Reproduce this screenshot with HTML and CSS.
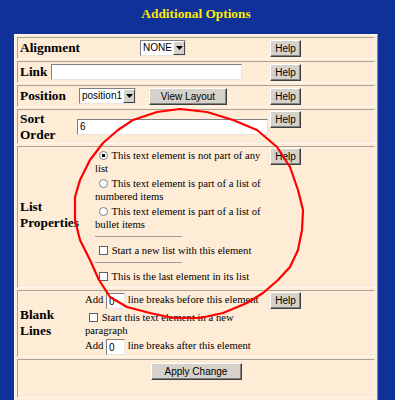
FILE: index.html
```html
<!DOCTYPE html>
<html lang="en">
<head>
    <meta charset="UTF-8">
    <meta name="viewport" content="width=device-width, initial-scale=1.0">
    <title>Additional Options</title>
    <link rel="stylesheet" href="styles.css">
</head>
<body>
    <div class="title">Additional Options</div>

    <form class="panel">
        <div class="row row-align">
            <div class="label">Alignment</div>
            <div class="field">
                <span class="select select-none"><span class="select-value">NONE</span><span class="select-arrow"><svg width="7" height="4" viewBox="0 0 7 4"><path d="M0 0h7L3.5 4z" fill="#000"/></svg></span></span>
            </div>
            <button type="button" class="btn btn-help">Help</button>
        </div>

        <div class="row row-link">
            <div class="label">Link</div>
            <div class="field">
                <input type="text" class="text-input input-wide">
            </div>
            <button type="button" class="btn btn-help">Help</button>
        </div>

        <div class="row row-position">
            <div class="label">Position</div>
            <div class="field">
                <span class="select select-position"><span class="select-value">position1</span><span class="select-arrow"><svg width="7" height="4" viewBox="0 0 7 4"><path d="M0 0h7L3.5 4z" fill="#000"/></svg></span></span>
                <button type="button" class="btn btn-layout">View Layout</button>
            </div>
            <button type="button" class="btn btn-help">Help</button>
        </div>

        <div class="row row-sort row-top">
            <div class="label">Sort<br>Order</div>
            <div class="field">
                <input type="text" class="text-input input-wide" value="6">
            </div>
            <button type="button" class="btn btn-help">Help</button>
        </div>

        <div class="row row-list row-top">
            <div class="label">List<br>Properties</div>
            <div class="field text">
                <label class="option"><input type="radio" name="list" checked> This text element is not part of any list</label>
                <label class="option"><input type="radio" name="list"> This text element is part of a list of numbered items</label>
                <label class="option"><input type="radio" name="list"> This text element is part of a list of bullet items</label>
                <hr>
                <label class="option"><input type="checkbox"> Start a new list with this element</label>
                <hr>
                <label class="option"><input type="checkbox"> This is the last element in its list</label>
            </div>
            <button type="button" class="btn btn-help">Help</button>
        </div>

        <div class="row row-blank row-top">
            <div class="label">Blank<br>Lines</div>
            <div class="field text">
                <div class="option">Add <input type="text" class="text-input input-small" value="0"> line breaks before this element</div>
                <label class="option"><input type="checkbox"> Start this text element in a new paragraph</label>
                <div class="option">Add <input type="text" class="text-input input-small" value="0"> line breaks after this element</div>
            </div>
            <button type="button" class="btn btn-help">Help</button>
        </div>

        <div class="row row-apply">
            <button type="button" class="btn btn-apply">Apply Change</button>
        </div>
    </form>

    <!-- red marker drawn over the list options -->
    <svg class="marker" width="395" height="400" viewBox="0 0 395 400">
        <polygon points="180,109 207,112 233,120 257,130 277,147 290,167 298,190 303,210 302,230 298,250 290,267 278,280 263,293 247,303 223,313 200,318 173,318 150,313 127,307 110,297 99,280 90,260 80,240 75,220 75,197 80,180 90,160 103,143 118,130 133,120 157,112" fill="none" stroke="#ff0000" stroke-width="2.2" stroke-linejoin="round"/>
    </svg>
</body>
</html>
```

FILE: styles.css
```css
body {
    margin: 0;
    background-color: #10309a;
    font-family: "Liberation Serif", "Times New Roman", serif;
    color: #000;
    position: relative;
}
.title {
    width: 364px;
    margin-left: 14px;
    height: 34px;
    line-height: 28px;
    text-align: center;
    font-size: 13.33px;
    font-weight: bold;
    color: #ffeb00;
}
.panel {
    width: 364px;
    margin: 0 0 0 14px;
    box-sizing: border-box;
    background: #ffecd6;
    border: 1px solid;
    border-color: #fff6ec #8f8a84 #8f8a84 #fff6ec;
    padding: 0 2px 2px 2px;
}
.row {
    display: flex;
    align-items: center;
    min-height: 20px;
    margin-top: 2px;
    padding: 0 73px 0 1px;
    border: 1px solid;
    border-color: #a8a29a #fff8f0 #fff8f0 #a8a29a;
}
.row-top {
    align-items: flex-start;
}
.label {
    flex: none;
    width: var(--label-w);
    padding-left: 1px;
    box-sizing: border-box;
    font-size: 13.33px;
    font-weight: bold;
    line-height: 16px;
}
.row-top .label {
    align-self: center;
}
.field {
    flex: 1;
    display: flex;
    align-items: center;
}
.row-align { --label-w: 121px; }
.row-link { --label-w: 32px; }
.row-position { --label-w: 60px; }
.row-sort { --label-w: 58px; min-height: 33px; }
.row-list { --label-w: 76px; padding-bottom: 4px; }
.row-blank { --label-w: 66px; padding-bottom: 1px; }

.row-sort .field {
    align-self: center;
}

.text {
    display: block;
    font-size: 10.67px;
    line-height: 13px;
    padding-right: 2px;
}
.option {
    display: block;
    margin-top: 2px;
}
.option input[type="radio"],
.option input[type="checkbox"] {
    margin: 0 1px 0 4px;
    vertical-align: -1px;
}
.text hr {
    width: 50%;
    margin: 5px 0 7px 0;
    border: 0;
    border-top: 1px solid #a09a94;
}

/* classic form controls */
.btn {
    font-family: "Liberation Sans", Arial, sans-serif;
    font-size: 10px;
    color: #000;
    height: 17px;
    padding: 0;
    background: #d6d2ca;
    border: 1px solid;
    border-color: #fff #404040 #404040 #fff;
    box-shadow: inset -1px -1px #808080;
    cursor: pointer;
}
.btn-help {
    flex: none;
    width: 31px;
}
.row-top .btn-help {
    margin-top: 1px;
}
.btn-layout {
    width: 78px;
    margin-left: 13px;
}
.row-apply {
    justify-content: center;
    padding: 0;
}
.btn-apply {
    flex: none;
    width: 91px;
    margin: 3px 0 17px;
}
.text-input {
    box-sizing: border-box;
    height: 16px;
    padding: 0 2px;
    font-family: "Liberation Sans", Arial, sans-serif;
    font-size: 10px;
    background: #fff;
    border: 1px solid;
    border-color: #808080 #e8e4de #e8e4de #808080;
    outline: none;
}
.input-wide {
    width: 191px;
}
.input-small {
    width: 19px;
    vertical-align: middle;
}
.select {
    display: inline-flex;
    align-items: stretch;
    box-sizing: border-box;
    height: 16px;
    background: #fff;
    border: 1px solid;
    border-color: #808080 #e8e4de #e8e4de #808080;
    font-family: "Liberation Sans", Arial, sans-serif;
    font-size: 10px;
}
.select-none { width: 46px; }
.select-position { width: 57px; }
.select-value {
    flex: 1;
    min-width: 0;
    overflow: hidden;
    padding-left: 2px;
    line-height: 14px;
    white-space: nowrap;
}
.select-arrow {
    flex: none;
    width: 12px;
    display: flex;
    align-items: center;
    justify-content: center;
    background: #d6d2ca;
    border: 1px solid;
    border-color: #fff #404040 #404040 #fff;
    box-sizing: border-box;
}
input[type="radio"] {
    appearance: none;
    width: 9px;
    height: 9px;
    border-radius: 50%;
    border: 1px solid #808080;
    background: #fff;
    box-sizing: border-box;
}
input[type="radio"]:checked {
    background: radial-gradient(circle, #000 0 1.6px, #fff 2px);
}
input[type="checkbox"] {
    appearance: none;
    width: 9px;
    height: 9px;
    border: 1px solid #606060;
    background: #fff;
    box-sizing: border-box;
}
.marker {
    position: absolute;
    left: 0;
    top: 0;
    pointer-events: none;
}
```
